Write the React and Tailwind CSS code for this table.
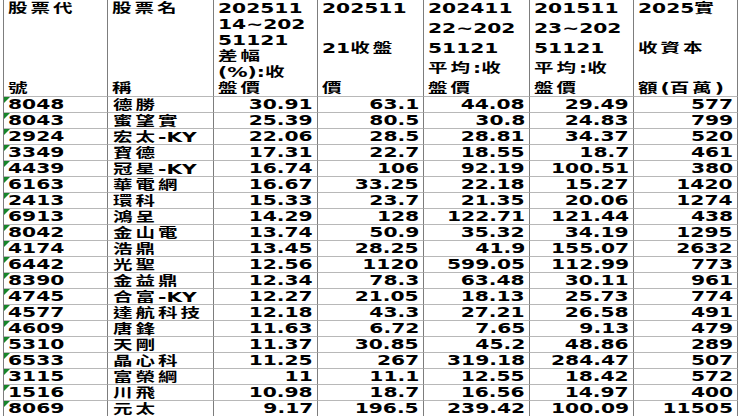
import React from "react";

const headers = [
  ["股票代", "號"],
  ["股票名", "稱"],
  ["202511", "14~202", "51121", "差幅", "(%):收", "盤價"],
  ["202511", "21收盤", "價"],
  ["202411", "22~202", "51121", "平均:收", "盤價"],
  ["201511", "23~202", "51121", "平均:收", "盤價"],
  ["2025實", "收資本", "額(百萬)"],
];

const rows = [
  ["8048", "德勝", "30.91", "63.1", "44.08", "29.49", "577"],
  ["8043", "蜜望實", "25.39", "80.5", "30.8", "24.83", "799"],
  ["2924", "宏太-KY", "22.06", "28.5", "28.81", "34.37", "520"],
  ["3349", "寶德", "17.31", "22.7", "18.55", "18.7", "461"],
  ["4439", "冠星-KY", "16.74", "106", "92.19", "100.51", "380"],
  ["6163", "華電網", "16.67", "33.25", "22.18", "15.27", "1420"],
  ["2413", "環科", "15.33", "23.7", "21.35", "20.06", "1274"],
  ["6913", "鴻呈", "14.29", "128", "122.71", "121.44", "438"],
  ["8042", "金山電", "13.74", "50.9", "35.32", "34.19", "1295"],
  ["4174", "浩鼎", "13.45", "28.25", "41.9", "155.07", "2632"],
  ["6442", "光聖", "12.56", "1120", "599.05", "112.99", "773"],
  ["8390", "金益鼎", "12.34", "78.3", "63.48", "30.11", "961"],
  ["4745", "合富-KY", "12.27", "21.05", "18.13", "25.73", "774"],
  ["4577", "達航科技", "12.18", "43.3", "27.21", "26.58", "491"],
  ["4609", "唐鋒", "11.63", "6.72", "7.65", "9.13", "479"],
  ["5310", "天剛", "11.37", "30.85", "45.2", "48.86", "289"],
  ["6533", "晶心科", "11.25", "267", "319.18", "284.47", "507"],
  ["3115", "富榮綱", "11", "11.1", "12.55", "18.42", "572"],
  ["1516", "川飛", "10.98", "18.7", "16.56", "14.97", "400"],
  ["8069", "元太", "9.17", "196.5", "239.42", "100.09", "11505"],
];

// CJK runs: smaller glyphs, wider spacing, nudged up a pixel
const Txt = ({ s, right }) => {
  const parts = s.split(/([\u3000-\u9fff\uff00-\uffef]+)/).filter(Boolean);
  return (
    <span
      className={`inline-block whitespace-nowrap scale-x-150 ${right ? "origin-right" : "origin-left"}`}
    >
      {parts.map((p, i) =>
        /[\u3000-\u9fff]/.test(p) ? (
          <span
            key={i}
            className="relative -top-px font-['Noto_Sans_CJK_TC',sans-serif] text-[13px] tracking-[2px]"
          >
            {p}
          </span>
        ) : (
          <span key={i}>{p}</span>
        )
      )}
    </span>
  );
};

const cellBorder = "border-r border-b border-r-[#7d7d7d] border-b-[#b8b8b8]";

export default function App() {
  return (
    <div className="w-[740px] h-[416px] overflow-hidden bg-white text-black font-bold text-[13.5px] font-['DejaVu_Sans','Noto_Sans_CJK_TC',sans-serif]">
      <div className="ml-[3px] w-[735px] border-l border-l-[#7d7d7d] grid grid-cols-[104px_106px_104px_106px_106px_104px_104px]">
        {headers.map((lines, i) => (
          <div
            key={i}
            className={`h-[97px] flex flex-col justify-between leading-[16px] pl-[4px] ${cellBorder} border-b-[#7d7d7d]`}
          >
            {lines.map((l, j) => (
              <div key={j} className="h-4">
                <Txt s={l} />
              </div>
            ))}
          </div>
        ))}

        {rows.map((r, ri) =>
          r.map((v, ci) => (
            <div
              key={`${ri}-${ci}`}
              className={`relative h-4 leading-[15px] ${cellBorder} ${
                ci < 2 ? "pl-[4px]" : "flex justify-end pr-[4px]"
              } ${ci === 1 ? "pl-[5px]" : ""}`}
            >
              {ci === 0 && (
                <svg className="absolute left-0 top-0" width="6" height="6" viewBox="0 0 6 6">
                  <polygon points="0,0 6,0 0,6" fill="#17852a" />
                </svg>
              )}
              <Txt s={v} right={ci >= 2} />
            </div>
          ))
        )}
      </div>
    </div>
  );
}
